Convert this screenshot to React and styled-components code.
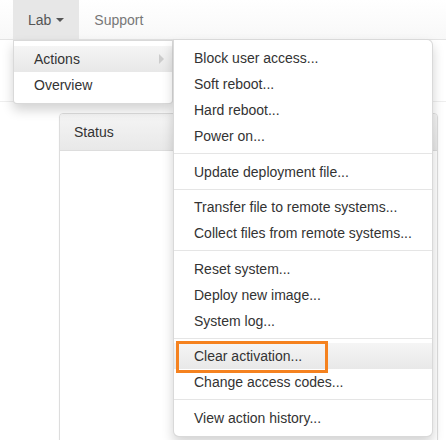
import React from "react";
import styled, { createGlobalStyle } from "styled-components";

const Global = createGlobalStyle`
  html, body { margin: 0; padding: 0; background: #fff; }
  body { font-family: "Liberation Sans", Arial, sans-serif; font-size: 14px; line-height: 20px; color: #333; }
  * { box-sizing: border-box; }
`;

const Page = styled.div`
  width: 446px;
  height: 440px;
  overflow: hidden;
  position: relative;
`;

const Navbar = styled.nav`
  height: 40px;
  background: linear-gradient(to bottom, #ffffff 0%, #f8f8f8 100%);
  border-bottom: 1px solid #e3e3e3;
  display: flex;
  padding-left: 13px;
  position: relative;
  z-index: 5;
`;

const NavItem = styled.div`
  position: relative;
  display: flex;
  align-items: center;
  height: 39px;
  padding: 0 15px;
  color: ${(p) => (p.$active ? "#555" : "#777")};
  background: ${(p) => (p.$active ? "#e7e7e7" : "transparent")};
  cursor: pointer;
`;

const Caret = styled.span`
  display: inline-block;
  width: 0;
  height: 0;
  margin-left: 5px;
  border-top: 4px solid #555;
  border-left: 4px solid transparent;
  border-right: 4px solid transparent;
`;

const Menu = styled.ul`
  position: absolute;
  top: 100%;
  left: ${(p) => p.$left}px;
  margin: ${(p) => (p.$sub ? "-7px 0 0 0" : "1px 0 0 0")};
  padding: 5px 0;
  list-style: none;
  width: ${(p) => p.$width}px;
  background: #fff;
  border: 1px solid rgba(0, 0, 0, 0.15);
  border-radius: ${(p) => (p.$sub ? "0 6px 6px 6px" : "0 0 4px 4px")};
  box-shadow: 0 6px 12px rgba(0, 0, 0, 0.175);
  z-index: 10;
`;

const SubWrap = styled.li`
  position: relative;
`;

const Item = styled.li`
  position: relative;
  display: flex;
  align-items: center;
  height: 26px;
  padding: 0 20px;
  color: #333;
  white-space: nowrap;
  background: ${(p) =>
    p.$hover ? "linear-gradient(to bottom, #f5f5f5 0%, #e8e8e8 100%)" : "transparent"};
`;

const SubArrow = styled.span`
  position: absolute;
  right: 8px;
  top: 8px;
  width: 0;
  height: 0;
  border-left: 5px solid #ccc;
  border-top: 5px solid transparent;
  border-bottom: 5px solid transparent;
`;

const Divider = styled.li`
  height: 1px;
  margin: 4px 0 4.5px;
  background: #e5e5e5;
`;

const Highlight = styled.span`
  position: absolute;
  left: 2px;
  top: -2px;
  width: 152px;
  height: 32px;
  border: 3px solid #f5821f;
  pointer-events: none;
`;

const Header = styled.div`
  height: 62px;
  border-bottom: 1px solid #eeeeee;
`;

const Content = styled.div`
  padding: 11px 8px 0 59px;
`;

const Panel = styled.div`
  border: 1px solid #dddddd;
  border-radius: 4px;
  height: 340px;
  box-shadow: 0 1px 2px rgba(0, 0, 0, 0.05);
`;

const PanelHeading = styled.div`
  height: 37px;
  padding: 0 14px;
  display: flex;
  align-items: center;
  background: linear-gradient(to bottom, #f5f5f5 0%, #e8e8e8 100%);
  border-bottom: 1px solid #dddddd;
  border-radius: 3px 3px 0 0;
  color: #333;
`;

const groups = [
  ["Block user access...", "Soft reboot...", "Hard reboot...", "Power on..."],
  ["Update deployment file..."],
  ["Transfer file to remote systems...", "Collect files from remote systems..."],
  ["Reset system...", "Deploy new image...", "System log..."],
  ["Clear activation...", "Change access codes..."],
  ["View action history..."],
];

export default function App() {
  return (
    <Page>
      <Global />
      <Navbar>
        <NavItem $active>
          Lab
          <Caret />
          <Menu $left={0} $width={160}>
            <SubWrap>
              <Item $hover>
                Actions
                <SubArrow />
              </Item>
              <Menu $sub $left={159} $width={260} style={{ top: 0 }}>
                {groups.map((g, gi) => (
                  <React.Fragment key={gi}>
                    {gi > 0 && <Divider />}
                    {g.map((t) => (
                      <Item key={t} $hover={t === "Clear activation..."}>
                        {t}
                        {t === "Clear activation..." && <Highlight />}
                      </Item>
                    ))}
                  </React.Fragment>
                ))}
              </Menu>
            </SubWrap>
            <Item>Overview</Item>
          </Menu>
        </NavItem>
        <NavItem>Support</NavItem>
      </Navbar>
      <Header />
      <Content>
        <Panel>
          <PanelHeading>Status</PanelHeading>
        </Panel>
      </Content>
    </Page>
  );
}
